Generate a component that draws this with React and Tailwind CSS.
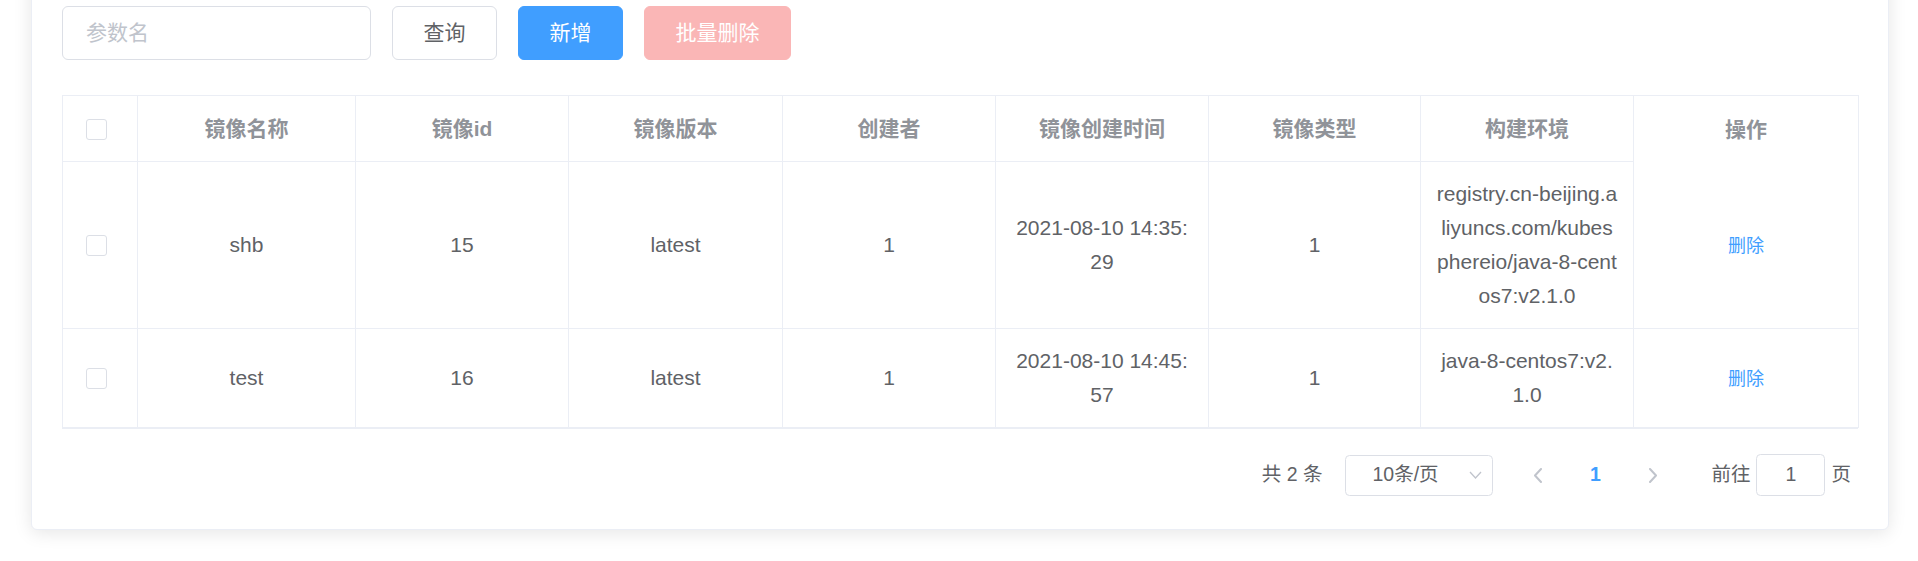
import React from 'react';

const rows = [
  {
    name: 'shb',
    id: '15',
    version: 'latest',
    creator: '1',
    time: ['2021-08-10 14:35:', '29'],
    type: '1',
    env: ['registry.cn-beijing.a', 'liyuncs.com/kubes', 'phereio/java-8-cent', 'os7:v2.1.0'],
  },
  {
    name: 'test',
    id: '16',
    version: 'latest',
    creator: '1',
    time: ['2021-08-10 14:45:', '57'],
    type: '1',
    env: ['java-8-centos7:v2.', '1.0'],
  },
];

const headers = ['镜像名称', '镜像id', '镜像版本', '创建者', '镜像创建时间', '镜像类型', '构建环境'];

const Checkbox = () => (
  <div className="flex h-[34px] items-center pl-[23px]">
    <span className="inline-block h-[21px] w-[21px] rounded-[3px] border border-[#DCDFE6] bg-white" />
  </div>
);

const Lines = ({ lines }) => (
  <>
    {lines.map((l, i) => (
      <div key={i} className="whitespace-nowrap">
        {l}
      </div>
    ))}
  </>
);

const Chevron = ({ dir }) => (
  <svg width="10" height="15" viewBox="0 0 10 15" fill="none">
    <polyline
      points={dir === 'left' ? '8,1 2,7.5 8,14' : '2,1 8,7.5 2,14'}
      stroke="#C0C4CC"
      strokeWidth="2"
      strokeLinejoin="round"
      strokeLinecap="round"
    />
  </svg>
);

export default function App() {
  const th = 'border-r border-b border-[#EBEEF5] pt-[16px] pb-[15px] px-[15px] text-center font-bold text-[#909399]';
  const td = 'border-r border-b border-[#EBEEF5] pt-[15px] pb-[15px] px-[15px] text-center align-middle text-[#606266]';

  return (
    <div className="h-[561px] overflow-hidden bg-white font-['Liberation_Sans','Noto_Sans_CJK_SC',sans-serif]">
      <div className="-mt-[24px] ml-[31px] w-[1858px] rounded-[6px] border border-[#EBEEF5] bg-white px-[30px] pt-[29px] pb-[33px] shadow-[0_3px_18px_rgba(0,0,0,0.1)]">
        {/* 搜索栏 */}
        <div className="flex items-center gap-[21px]">
          <input
            placeholder="参数名"
            className="h-[54px] w-[309px] rounded-[6px] border border-[#DCDFE6] px-[23px] text-[21px] text-[#606266] outline-none placeholder:text-[#C0C4CC]"
          />
          <button className="h-[54px] w-[105px] rounded-[6px] border border-[#DCDFE6] bg-white text-[21px] text-[#606266]">
            查询
          </button>
          <button className="h-[54px] w-[105px] rounded-[6px] border border-[#409EFF] bg-[#409EFF] text-[21px] text-white">
            新增
          </button>
          <button className="h-[54px] w-[147px] cursor-not-allowed rounded-[6px] border border-[#fab6b6] bg-[#fab6b6] text-[21px] text-white">
            批量删除
          </button>
        </div>

        {/* 表格 */}
        <div className="mt-[35px] border-b border-[#EBEEF5]">
          <table className="w-full table-fixed border-separate border-spacing-0 border-l border-t border-[#EBEEF5] text-[21px] leading-[34px]">
            <colgroup>
              <col className="w-[75px]" />
              <col className="w-[218px]" />
              <col className="w-[213px]" />
              <col className="w-[214px]" />
              <col className="w-[213px]" />
              <col className="w-[213px]" />
              <col className="w-[212px]" />
              <col className="w-[213px]" />
              <col className="w-[225px]" />
            </colgroup>
            <thead>
              <tr>
                <th className="border-r border-b border-[#EBEEF5] pt-[16px] pb-[15px]">
                  <Checkbox />
                </th>
                {headers.map((h) => (
                  <th key={h} className={th}>
                    {h}
                  </th>
                ))}
                <th className="border-r border-[#EBEEF5] pt-[16px] pb-[15px] px-[15px] text-center font-bold text-[#909399]">
                  操作
                </th>
              </tr>
            </thead>
            <tbody>
              {rows.map((r) => (
                <tr key={r.id}>
                  <td className="border-r border-b border-[#EBEEF5] align-middle">
                    <Checkbox />
                  </td>
                  <td className={td}>{r.name}</td>
                  <td className={td}>{r.id}</td>
                  <td className={td}>{r.version}</td>
                  <td className={td}>{r.creator}</td>
                  <td className={td}>
                    <Lines lines={r.time} />
                  </td>
                  <td className={td}>{r.type}</td>
                  <td className={td}>
                    <Lines lines={r.env} />
                  </td>
                  <td className={td}>
                    <span className="cursor-pointer text-[18px] text-[#409EFF]">删除</span>
                  </td>
                </tr>
              ))}
            </tbody>
          </table>
        </div>

        {/* 分页 */}
        <div className="mt-[25px] flex h-[42px] items-center justify-end pr-[7px] text-[19.5px] text-[#606266]">
          <span className="mr-[23px]">共 2 条</span>
          <div className="flex h-[41px] w-[148px] items-center justify-between rounded-[4.5px] border border-[#DCDFE6] pl-[26px] pr-[10px]">
            <span>10条/页</span>
            <svg width="13" height="8" viewBox="0 0 13 8" fill="none">
              <polyline points="1,1 6.5,7 12,1" stroke="#C0C4CC" strokeWidth="1.3" />
            </svg>
          </div>
          <div className="ml-[17px] flex w-[56px] justify-center">
            <Chevron dir="left" />
          </div>
          <div className="w-[58px] text-center font-bold text-[#409EFF]">1</div>
          <div className="flex w-[58px] justify-center">
            <Chevron dir="right" />
          </div>
          <span className="ml-[29px]">前往</span>
          <div className="ml-[6px] flex h-[42px] w-[69px] items-center justify-center rounded-[4.5px] border border-[#DCDFE6]">
            1
          </div>
          <span className="ml-[6px]">页</span>
        </div>
      </div>
    </div>
  );
}
